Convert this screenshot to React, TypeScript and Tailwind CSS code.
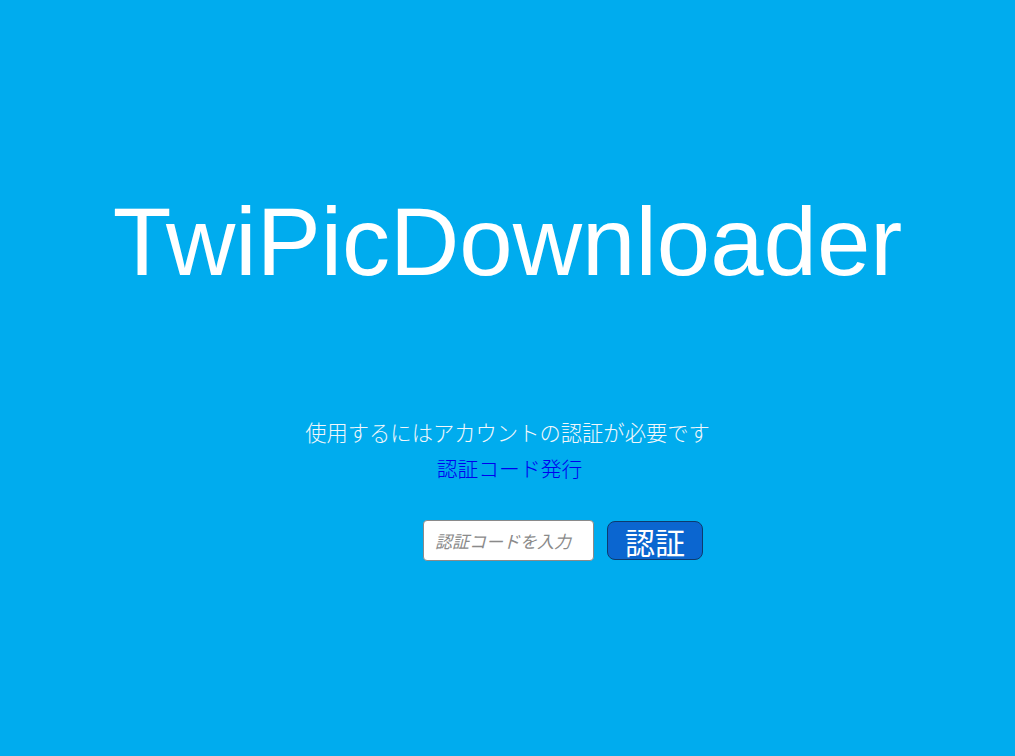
import React from "react";

export default function App() {
  return (
    <div className="min-h-[756px] w-full bg-[#00acee] flex flex-col items-center pt-[194px]">
      <h1
        className="text-[96px] leading-[96px] text-white font-normal"
        style={{ fontFamily: '"Liberation Sans", Arial, sans-serif' }}
      >
        TwiPicDownloader
      </h1>
      <div
        className="mt-[125px] flex flex-col items-center text-[21.3px] leading-[34px]"
        style={{ fontFamily: '"Noto Sans CJK JP", sans-serif' }}
      >
        <p className="text-[#f2f7fb] font-light">使用するにはアカウントの認証が必要です</p>
        <a href="#" className="mt-[2px] text-[#0000ee] font-light text-[20.8px] pl-[4px]">認証コード発行</a>
      </div>
      <div className="mt-[35px] flex items-center justify-center w-full pl-[111px] gap-[13px]">
        <input
          type="text"
          placeholder="認証コードを入力"
          className="w-[171px] h-[41px] bg-white border border-[#8a8a8a] rounded-[4px] pl-[11px] text-[17px] italic placeholder:text-[#8a8a8a] outline-none"
          style={{ fontFamily: '"Noto Sans CJK JP", sans-serif' }}
        />
        <button
          className="w-[96px] h-[39px] bg-[#0b66d0] border-[1.5px] border-[#0d3b6e] rounded-[8px] text-white text-[30px] leading-none flex items-center justify-center"
          style={{ fontFamily: '"Noto Sans CJK JP", sans-serif' }}
        >
          認証
        </button>
      </div>
    </div>
  );
}
